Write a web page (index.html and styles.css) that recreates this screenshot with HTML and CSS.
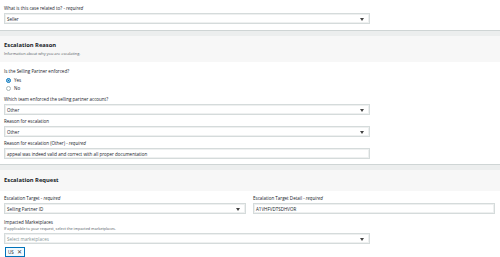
FILE: index.html
```html
<html>
	<head>
		<title>Escalation</title>
		<link rel="stylesheet" href="styles.css">
	</head>
	<body>
		<div class="body first">
			<div class="field">
				<div class="label">What is this case related to? - <i>required</i></div>
				<div class="select wide">Seller<span class="arrow"></span></div>
			</div>
		</div>

		<div class="head">
			<div class="title">Escalation Reason</div>
			<div class="sub">Information about why you are escalating.</div>
		</div>
		<div class="body">
			<div class="field radiofield">
				<div class="label">Is the Selling Partner enforced?</div>
				<div class="radios">
					<div class="radio"><span class="dot on"></span>Yes</div>
					<div class="radio"><span class="dot"></span>No</div>
				</div>
			</div>
			<div class="field">
				<div class="label">Which team enforced the selling partner account?</div>
				<div class="select wide">Other<span class="arrow"></span></div>
			</div>
			<div class="field">
				<div class="label">Reason for escalation</div>
				<div class="select wide">Other<span class="arrow"></span></div>
			</div>
			<div class="field">
				<div class="label">Reason for escalation (Other) - <i>required</i></div>
				<div class="input wide">appeal was indeed valid and correct with all proper documentation</div>
			</div>
		</div>

		<div class="head short">
			<div class="title">Escalation Request</div>
		</div>
		<div class="body second">
			<div class="cols">
				<div class="field">
					<div class="label">Escalation Target - <i>required</i></div>
					<div class="select">Selling Partner ID<span class="arrow"></span></div>
				</div>
				<div class="field">
					<div class="label">Escalation Target Detail - <i>required</i></div>
					<div class="input">A1VHFVDTSDHVOR</div>
				</div>
			</div>
			<div class="field">
				<div class="label">Impacted Marketplaces</div>
				<div class="hint">If applicable to your request, select the impacted marketplaces.</div>
				<div class="select wide placeholder">Select marketplaces<span class="arrow"></span></div>
				<div class="tag">US <span class="x">&#x2715;</span></div>
			</div>
		</div>
	</body>
</html>
```

FILE: styles.css
```css
body{
	margin: 0;
	background-color: white;
	font-family: "Open Sans", "Liberation Sans", sans-serif;
	color: #16191f;
	font-size: 4.5px;
}

/* white form area */
.body{
	padding: 6px 4px 5px 4px;
	display: flex;
	flex-direction: column;
	gap: 3px;
}
.body.first{
	padding-top: 5px;
	padding-bottom: 6px;
}
.body.second{
	padding-top: 4px;
	gap: 5px;
}

.field{
	display: flex;
	flex-direction: column;
}
.radiofield{
	margin-bottom: 2px;
}
.radiofield .label{
	margin-bottom: 3px;
}

.label{
	line-height: 6px;
	margin-bottom: 2px;
}
.label i{
	font-style: italic;
}

.hint{
	font-size: 3.8px;
	line-height: 5px;
	color: #545b64;
	margin-top: -1px;
	margin-bottom: 2px;
}

.select, .input{
	position: relative;
	box-sizing: border-box;
	height: 11px;
	border: 1px solid #d5dbdb;
	box-shadow: inset 0 0 0 1px #eef0f0;
	background-color: white;
	padding: 0 2px;
	display: flex;
	align-items: center;
	width: 242px;
}
.wide{
	width: 366px;
}
.placeholder{
	color: #879596;
}

.arrow{
	position: absolute;
	right: 5px;
	top: 4px;
	width: 0;
	height: 0;
	border-left: 2px solid transparent;
	border-right: 2px solid transparent;
	border-top: 3px solid #444;
}

/* section header with the grey gap above */
.head{
	border-top: 1px solid #cfd5d5;
	box-shadow: inset 0 5px 0 #eceeee;
	background-color: #f7f7f7;
	padding: 10px 4px 0 4px;
	height: 32px;
	box-sizing: border-box;
}
.head.short{
	height: 27px;
	padding-top: 11px;
}
.title{
	font-weight: bold;
	font-size: 5.8px;
	line-height: 8px;
}
.sub{
	font-size: 3.9px;
	line-height: 5px;
	margin-top: 1.5px;
	color: #545b64;
}

.radios{
	display: flex;
	flex-direction: column;
	gap: 2px;
}
.radio{
	display: flex;
	align-items: center;
	gap: 3px;
	line-height: 6px;
	padding-left: 2px;
}
.dot{
	box-sizing: border-box;
	width: 5px;
	height: 5px;
	border-radius: 50%;
	border: 1px solid #aab7b8;
	background-color: white;
}
.dot.on{
	border: 1.5px solid #0073bb;
	background-color: white;
	box-shadow: inset 0 0 0 0.5px white, inset 0 0 0 3px #0073bb;
}

.cols{
	display: flex;
	gap: 7px;
}
.cols .field{
	width: 242px;
}

.tag{
	margin-top: 3px;
	align-self: flex-start;
	margin-left: 1px;
	box-sizing: border-box;
	height: 10px;
	width: 20px;
	border: 1px solid #0073bb;
	background-color: #f1faff;
	display: flex;
	align-items: center;
	gap: 3px;
	padding-left: 2px;
	font-size: 4.5px;
}
.x{
	font-size: 5.5px;
	color: #444;
}
```
